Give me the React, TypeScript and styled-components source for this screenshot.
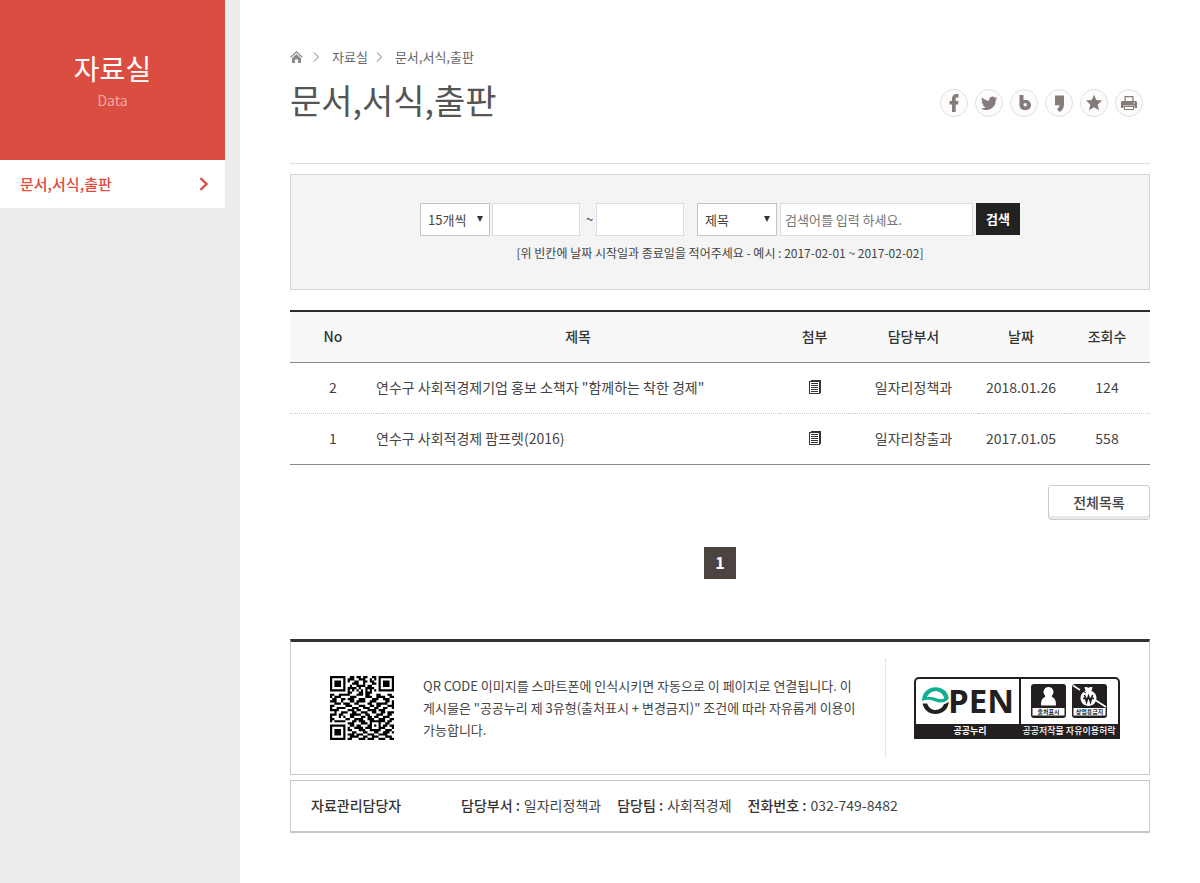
import React from "react";
import styled, { createGlobalStyle } from "styled-components";

const Global = createGlobalStyle`
  *, *::before, *::after { box-sizing: border-box; }
  body {
    margin: 0;
    background: #fff;
    color: #444;
    font-family: "Noto Sans CJK KR", "Noto Sans", sans-serif;
    font-size: 14px;
    line-height: 20px;
  }
  a { color: inherit; text-decoration: none; }
  button, input, select { font: inherit; color: inherit; border-radius: 0; }
`;

const Page = styled.div`
  display: flex;
  min-height: 100vh;
`;

const Sidebar = styled.aside`
  flex: none;
  width: 240px;
  padding-right: 15px;
  background: #ececec;
`;

const SideHead = styled.div`
  display: flex;
  flex-direction: column;
  align-items: center;
  height: 160px;
  padding-top: 48px;
  background: #dc4d41;
  color: #fff;
`;

const SideTitle = styled.h2`
  margin: 0;
  font-size: 28px;
  line-height: 40px;
  font-weight: 400;
`;

const SideSub = styled.p`
  margin: 2px 0 0;
  color: #f0a9a3;
`;

const SideLink = styled.a`
  display: flex;
  align-items: center;
  justify-content: space-between;
  height: 48px;
  padding: 0 16px 0 20px;
  background: #fff;
  color: #dc4d41;
  font-size: 15px;
  font-weight: 500;
`;

const Main = styled.main`
  flex: 1;
  min-width: 0;
  padding: 47px 50px 50px;
`;

const Crumbs = styled.nav`
  color: #666;
  font-size: 13px;
`;

const CrumbList = styled.ol`
  display: flex;
  align-items: center;
  gap: 8px;
  height: 20px;
  margin: 0;
  padding: 0;
  list-style: none;
`;

const Crumb = styled.li`
  display: flex;
  align-items: center;
  gap: 12px;
`;

const Header = styled.header`
  display: flex;
  justify-content: space-between;
  height: 97px;
  padding: 7px 7px 0 0;
  border-bottom: 1px solid #ddd;
`;

const Title = styled.h1`
  margin: 0;
  color: #555;
  font-size: 34px;
  line-height: 52px;
  font-weight: 400;
`;

const Share = styled.div`
  display: flex;
  gap: 7px;
  padding-top: 15px;
`;

const ShareButton = styled.button`
  display: grid;
  place-items: center;
  width: 28px;
  height: 28px;
  padding: 0;
  border: 1px solid #e0e0e0;
  border-radius: 50%;
  background: #fcfcfc;
  cursor: pointer;
`;

const SearchBox = styled.form`
  display: flex;
  flex-direction: column;
  align-items: center;
  gap: 7px;
  height: 116px;
  margin-top: 10px;
  padding-top: 28px;
  border: 1px solid #d4d4d4;
  background: #f4f4f4;
  font-size: 13px;
`;

const Fields = styled.div`
  display: flex;
  align-items: flex-start;
`;

const SelectWrap = styled.span<{ $width: number }>`
  position: relative;
  width: ${(p) => p.$width}px;
  height: 33px;

  &::after {
    content: "";
    position: absolute;
    top: 13px;
    right: 7px;
    border: 3px solid transparent;
    border-top: 6px solid #333;
    border-bottom: 0;
    pointer-events: none;
  }
`;

const Select = styled.select`
  appearance: none;
  width: 100%;
  height: 100%;
  padding: 0 7px;
  border: 1px solid #c4c4c4;
  background: #fff;
`;

const Field = styled.input<{ $width: number }>`
  width: ${(p) => p.$width}px;
  height: 33px;
  margin-left: 2px;
  padding: 0 4px;
  border: 1px solid #ddd;
  background: #fff;

  &::placeholder { color: #757575; opacity: 1; }
`;

const Tilde = styled.span`
  width: 14px;
  padding-left: 6px;
  line-height: 32px;
`;

const KeywordGroup = styled.span`
  display: flex;
  margin-left: 13px;
  gap: 1px;
`;

const SearchButton = styled.button`
  width: 44px;
  height: 32px;
  margin-left: 3px;
  padding: 0;
  border: 0;
  background: #222;
  color: #fff;
  font-weight: 700;
  cursor: pointer;
`;

const Hint = styled.p`
  margin: 0;
  font-size: 12px;
`;

const Table = styled.table`
  width: 100%;
  margin-top: 20px;
  border-collapse: collapse;
  border-top: 2px solid #2b2b2b;
  border-bottom: 1px solid #888;
  table-layout: fixed;
`;

const Th = styled.th<{ $width?: string }>`
  width: ${(p) => p.$width ?? "auto"};
  height: 51px;
  padding: 0 0 2px;
  border-bottom: 1px solid #888;
  background: #f8f8f8;
  color: #333;
  font-weight: 500;
`;

const Td = styled.td<{ $left?: boolean }>`
  height: 51px;
  padding: 0 0 2px;
  text-align: ${(p) => (p.$left ? "left" : "center")};

  tr + tr > & { border-top: 1px dotted #ccc; }
`;

const DocSvg = styled.svg`
  display: block;
  margin: 0 auto;
`;

const Actions = styled.div`
  display: flex;
  justify-content: flex-end;
  margin-top: 20px;
`;

const ListLink = styled.a`
  width: 102px;
  height: 35px;
  border: 1px solid #ccc;
  border-radius: 3px;
  box-shadow: inset 0 -3px 0 #e8e8e8;
  font-weight: 500;
  line-height: 32px;
  text-align: center;
`;

const Pager = styled.nav`
  display: flex;
  justify-content: center;
  margin-top: 27px;
`;

const PageLink = styled.a`
  width: 32px;
  height: 32px;
  background: #4c4441;
  color: #fff;
  font-size: 16px;
  font-weight: 700;
  line-height: 30px;
  text-align: center;
`;

const Info = styled.section`
  display: flex;
  align-items: center;
  height: 136px;
  margin-top: 60px;
  padding: 0 29px 0 39px;
  border: 1px solid #c8c8c8;
  border-top: 3px solid #333;
`;

const InfoText = styled.p`
  flex: 1;
  margin: 0 0 0 29px;
  padding-right: 16px;
  font-size: 13px;
  line-height: 22px;
  word-break: keep-all;
`;

const License = styled.div`
  display: flex;
  align-items: center;
  height: 98px;
  padding-left: 28px;
  border-left: 1px dotted #ccc;
`;

const Contact = styled.section`
  display: flex;
  align-items: center;
  height: 53px;
  margin-top: 5px;
  padding: 0 20px 2px;
  border: 1px solid #c8c8c8;
  border-bottom-width: 2px;
`;

const ContactTitle = styled.strong`
  width: 150px;
  color: #333;
  font-weight: 500;
`;

const ContactList = styled.dl`
  display: flex;
  gap: 16px;
  margin: 0;
`;

const ContactItem = styled.div`
  display: flex;
  gap: 4px;
`;

const Term = styled.dt`
  color: #333;
  font-weight: 500;
`;

const Desc = styled.dd`
  margin: 0;
`;

const HomeLink = styled.a`
  display: flex;
  margin-right: 2px;
`;

const HomeIcon = () => (
  <svg width="13" height="12" viewBox="0 0 13 12" fill="#8c8c8c" aria-hidden="true">
    <path d="M6.500 0 0 6l1 .8 5.500-5 5.500 5 1-.8z" />
    <path d="M2 7.200 6.500 3 11 7.200V12H8V8.500H5V12H2z" />
  </svg>
);

const CrumbArrow = () => (
  <svg width="7" height="10" viewBox="0 0 7 10" fill="none" stroke="#777" aria-hidden="true">
    <path d="m1 .5 4.500 4.500L1 9.500" />
  </svg>
);

const shareIcons: { label: string; shape: React.ReactNode }[] = [
  { label: "페이스북", shape: <path d="M7 18V10.500H4.500V7H7V5.200C7 2.200 8.700 0 11 0h2.500v3.500h-1.600c-.9 0-1.200.4-1.200 1.200V7h2.800l-.4 3.500h-2.400V18z" /> },
  { label: "트위터", shape: <path d="M17.500 4.200c-.6.300-1.200.5-1.900.6.700-.4 1.200-1.100 1.400-1.900-.6.400-1.300.7-2.100.8a3.400 3.400 0 0 0-5.800 3.100C6.300 6.700 3.800 5.300 2.100 3.200c-.9 1.600-.4 3.500 1 4.500-.5 0-1-.2-1.500-.4 0 1.600 1.100 3 2.700 3.300-.5.100-1 .1-1.500.1.400 1.300 1.700 2.300 3.100 2.300A6.800 6.800 0 0 1 1 14.400a9.500 9.500 0 0 0 14.700-8.500c.7-.4 1.300-1 1.800-1.700z" /> },
  { label: "밴드", shape: <path d="M4.500 1h4v5.300c4-1.300 7.500 1 7.500 4.700 0 3.200-2.400 5.200-5.700 5.200-3.600 0-5.800-2-5.800-5.200zm5.700 8a1.700 1.700 0 1 0 0 3.400 1.700 1.700 0 0 0 0-3.400z" /> },
  { label: "카카오스토리", shape: <path d="M5 1.500h9V10c0 4-1.700 6.500-4.500 8L7 15c1.500-.8 2.500-2 2.500-3.800H5z" /> },
  { label: "즐겨찾기", shape: <path d="m9 .8 2.300 5.300 5.700.5-4.300 3.900 1.300 5.700-5-3-5 3 1.300-5.700L1 6.600l5.700-.5z" /> },
  { label: "인쇄", shape: <><path d="M4.500 7V2h9v5h-1.200V3.200H5.700V7z" /><path fillRule="evenodd" d="M2 7h14l1 1v6h-2.500v-2.500h-11V14H1V8zm11.500 1.500v1h1.500v-1z" /><path d="M4 12h10v4H4zm1 1v2h8v-2z" /></> },
];

const DocIcon = () => (
  <DocSvg width="12" height="14" viewBox="0 0 12 14" role="img" aria-label="첨부파일">
    <path fill="#333" d="M2 0h10v13h-1v1H0V1h2z" />
    <path fill="#fff" d="M1 2h9v11H1z" />
    <path stroke="#333" d="M2 3.500h7M2 5.500h7M2 7.500h7M2 9.500h7M2 11.500h7" />
  </DocSvg>
);

const qrRows = [
  "11111110011011011001101111111",
  "10000010111001110010101000001",
  "10111010100110011011001011101",
  "10111010001110010001101011101",
  "10111010010011110110001011101",
  "10000010111101001111001000001",
  "11111110101010101010101111111",
  "00000000110001101110000000000",
  "11001111100011101100011000110",
  "10111000011100001110011110011",
  "01100110111001110001110011100",
  "11100100011011110011100001101",
  "00111011100110000110011111001",
  "11000001110001110011011000111",
  "10011110001110011100110011001",
  "11110000111011000111101110000",
  "00100111001100111001100110111",
  "11101100011111001100011100110",
  "10001010011000110110110011100",
  "11000001100111100111001110011",
  "10111110001101110011111110110",
  "00000000111000111010001001100",
  "11111110011011000110101011011",
  "10000010100111101110001110001",
  "10111010110001110011111001110",
  "10111010001100011000110011101",
  "10111010111011100111001111000",
  "10000010011110011001110001110",
  "11111110110001110111001110011",
];

const QrCode = () => (
  <svg width="64" height="64" viewBox="0 0 29 29" role="img" aria-label="QR CODE">
    <path
      d={qrRows
        .map((row, y) => [...row].map((cell, x) => (cell === "1" ? `M${x} ${y}h1v1h-1z` : "")).join(""))
        .join("")}
    />
  </svg>
);

const OpenMark = () => (
  <svg width="206" height="62" viewBox="0 0 206 62" role="img" aria-label="OPEN 공공누리 공공저작물 자유이용허락">
    <path fill="#231f20" d="M0 62V5a5 5 0 0 1 5-5h196a5 5 0 0 1 5 5v57z" />
    <path fill="#fff" d="M2 47V5a3 3 0 0 1 3-3h100v45zM107 47V2h94a3 3 0 0 1 3 3v42z" />
    <path
      fill="#231f20"
      d="M8.500 26.500C10 33 15 37 21.500 37 29 37 34.500 32 34.800 24.500c-1.500 1.500-3 2.300-4.800 2.600-1.300 3.500-4.500 5.900-8.500 5.900-4 0-7-2.500-8.300-6.500z"
    />
    <path
      fill="#12ae92"
      fillRule="evenodd"
      d="M8 24C8 15.500 14 10.200 21.500 10.200c7 0 12.500 4.500 13.300 11-2.500 4.500-7.800 5.300-13.300 3.300C16.500 22.300 12 22 8 24zm5-3.800c3-.7 6.300-.2 9.500 1.100 3 1.200 6 1.200 7.800-.3-1.300-4-4.700-6.700-8.800-6.700-4 0-7 2.300-8.500 5.900z"
    />
    <text x="34" y="36" fontFamily="Open Sans" fontSize="33" fontWeight="700" fill="#231f20">PEN</text>
    <rect x="117" y="7" width="35" height="34" rx="3" fill="#231f20" />
    <rect x="158" y="7" width="35" height="34" rx="3" fill="#231f20" />
    <path fill="#fff" d="M118.500 31h32v7.500h-32zM159.500 31h32v7.500h-32z" />
    <path fill="#fff" d="M134.500 10a5 5 0 0 1 3.500 8.500c-.5 1 0 1.500 1 2 2.500 1.500 3 4 3 8h-15c0-4 .5-6.500 3-8 1-.5 1.500-1 1-2a5 5 0 0 1 3.500-8.500z" />
    <path fill="#fff" d="M170.500 10.500c1.500-1 2.500.2 4 .2s2.500-1.200 4-.2l-1 3.500c3 1 5 3.800 5 7 0 4.400-3.500 8-8 8s-8-3.600-8-8c0-3.200 2-6 5-7z" />
    <path stroke="#fff" strokeWidth="1.500" d="m159 8.500 7 4.500M182 23.500l10 6.500" />
    <path stroke="#231f20" d="m168 13.500 4 2.500" />
    <path fill="none" stroke="#231f20" strokeWidth="1.600" d="m170.500 18 2 7 2-6 2 6 2-7M169 21.500h11" />
    <g fontFamily="Noto Sans CJK KR" fontWeight="700" textAnchor="middle">
      <g fontSize="6" fill="#231f20"><text x="134.500" y="37">출처표시</text><text x="175.500" y="37">상업용금지</text></g>
      <g fontSize="9" fill="#fff"><text x="56" y="57">공공누리</text><text x="155" y="57" fontWeight="500">공공저작물 자유이용허락</text></g>
    </g>
  </svg>
);

const rows = [
  { no: 2, title: '연수구 사회적경제기업 홍보 소책자 "함께하는 착한 경제"', dept: "일자리정책과", date: "2018.01.26", views: 124 },
  { no: 1, title: "연수구 사회적경제 팜프렛(2016)", dept: "일자리창출과", date: "2017.01.05", views: 558 },
];

const contacts = [
  ["담당부서", "일자리정책과"],
  ["담당팀", "사회적경제"],
  ["전화번호", "032-749-8482"],
];

export default function App() {
  return (
    <Page>
      <Global />
      <Sidebar>
        <SideHead>
          <SideTitle>자료실</SideTitle>
          <SideSub>Data</SideSub>
        </SideHead>
        <SideLink href="#docs">
          문서,서식,출판
          <svg width="10" height="14" viewBox="0 0 10 14" fill="none" stroke="#dc4d41" strokeWidth="2.400" aria-hidden="true">
            <path d="m1.500 1 6 6-6 6" />
          </svg>
        </SideLink>
      </Sidebar>
      <Main>
        <Crumbs aria-label="현재 위치">
          <CrumbList>
            <Crumb><HomeLink href="#home" aria-label="홈"><HomeIcon /></HomeLink></Crumb>
            <Crumb><CrumbArrow /><a href="#data">자료실</a></Crumb>
            <Crumb><CrumbArrow /><a href="#docs">문서,서식,출판</a></Crumb>
          </CrumbList>
        </Crumbs>
        <Header>
          <Title>문서,서식,출판</Title>
          <Share>
            {shareIcons.map((icon) => (
              <ShareButton key={icon.label} type="button" aria-label={icon.label}>
                <svg width="18" height="18" viewBox="0 0 18 18" fill="#857c7a" fillRule="evenodd" aria-hidden="true">{icon.shape}</svg>
              </ShareButton>
            ))}
          </Share>
        </Header>
        <SearchBox onSubmit={(e) => e.preventDefault()}>
          <Fields>
            <SelectWrap $width={70}>
              <Select aria-label="목록 개수"><option>15개씩</option></Select>
            </SelectWrap>
            <Field $width={88} aria-label="시작일" />
            <Tilde>~</Tilde>
            <Field $width={88} aria-label="종료일" />
            <KeywordGroup>
              <SelectWrap $width={80}>
                <Select aria-label="검색 구분"><option>제목</option></Select>
              </SelectWrap>
              <Field $width={193} aria-label="검색어" placeholder="검색어를 입력 하세요." />
            </KeywordGroup>
            <SearchButton type="submit">검색</SearchButton>
          </Fields>
          <Hint>[위 빈칸에 날짜 시작일과 종료일을 적어주세요 - 예시 : 2017-02-01 ~ 2017-02-02]</Hint>
        </SearchBox>
        <Table>
          <thead>
            <tr>
              <Th $width="10%">No</Th>
              <Th>제목</Th>
              <Th $width="8%">첨부</Th>
              <Th $width="15%">담당부서</Th>
              <Th $width="10%">날짜</Th>
              <Th $width="10%">조회수</Th>
            </tr>
          </thead>
          <tbody>
            {rows.map((row) => (
              <tr key={row.no}>
                <Td>{row.no}</Td>
                <Td $left><a href={`#post-${row.no}`}>{row.title}</a></Td>
                <Td><DocIcon /></Td>
                <Td>{row.dept}</Td>
                <Td>{row.date}</Td>
                <Td>{row.views}</Td>
              </tr>
            ))}
          </tbody>
        </Table>
        <Actions><ListLink href="#list">전체목록</ListLink></Actions>
        <Pager aria-label="페이지"><PageLink href="#page-1" aria-current="page">1</PageLink></Pager>
        <Info>
          <QrCode />
          <InfoText>
            QR CODE 이미지를 스마트폰에 인식시키면 자동으로 이 페이지로 연결됩니다. 이 게시물은 "공공누리 제 3유형(출처표시 + 변경금지)" 조건에 따라 자유롭게 이용이 가능합니다.
          </InfoText>
          <License><OpenMark /></License>
        </Info>
        <Contact>
          <ContactTitle>자료관리담당자</ContactTitle>
          <ContactList>
            {contacts.map(([term, desc]) => (
              <ContactItem key={term}>
                <Term>{term} :</Term>
                <Desc>{desc}</Desc>
              </ContactItem>
            ))}
          </ContactList>
        </Contact>
      </Main>
    </Page>
  );
}
